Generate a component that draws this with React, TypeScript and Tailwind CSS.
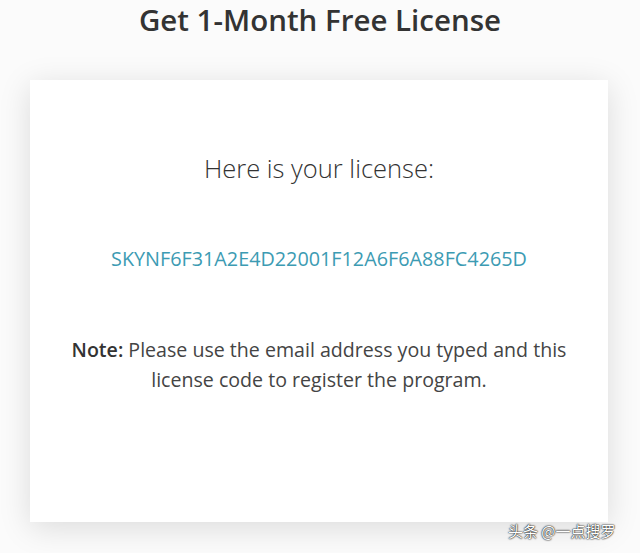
import React from "react";

export default function App() {
  return (
    <div
      className="w-[640px] h-[553px] overflow-hidden bg-[#fbfbfb] relative"
      style={{ fontFamily: '"Open Sans", "Noto Sans", sans-serif' }}
    >
      <div className="pt-0 h-[80px] flex justify-center">
        <h1 className="text-[29.5px] leading-[40px] font-semibold text-[#333]">
          Get 1-Month Free License
        </h1>
      </div>
      <div className="ml-[30px] w-[578px] h-[442px] bg-white shadow-[0_6px_30px_rgba(0,0,0,0.13)] flex flex-col items-center">
        <p className="mt-[71px] text-[25.5px] leading-[35px] font-light text-[#333]">Here is your license:</p>
        <p className="mt-[59px] text-[19.8px] leading-[28px] text-[#3c9bb3]">
          SKYNF6F31A2E4D22001F12A6F6A88FC4265D
        </p>
        <p className="mt-[62px] text-[19.6px] leading-[30px] text-[#444] text-center w-[540px]">
          <span className="font-semibold text-[#333]">Note:</span> Please use the email address you typed and this license code to register the program.
        </p>
      </div>
      <div
        className="absolute left-[508px] top-[520px] text-[15px] text-white"
        style={{
          fontFamily: '"Noto Sans CJK SC", "Noto Sans", sans-serif',
          textShadow: "0 0 2px #000, 0 0 1px #000",
        }}
      >
        头条 @一点搜罗
      </div>
    </div>
  );
}
